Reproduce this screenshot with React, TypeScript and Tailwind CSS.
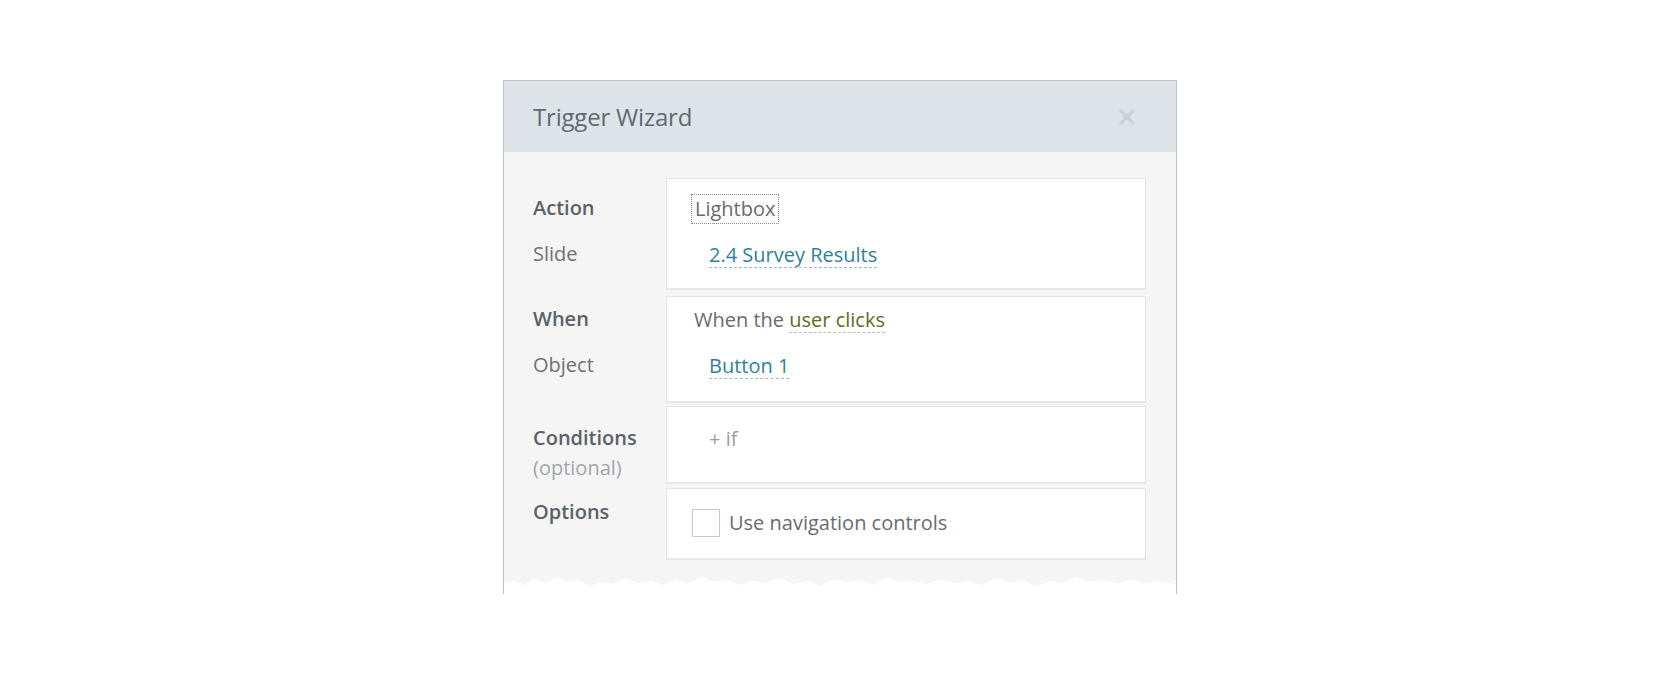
import { X } from 'lucide-react';

// ── Torn paper edge along the bottom of the cropped dialog ─────────
const TORN_POINTS =
  '0,9 10,7 20,11 30,5 42,9 54,3 62,8 74,6 86,12 98,8 110,10 122,4 134,9 148,7 160,11 172,6 186,9 198,2 210,8 224,6 238,11 250,7 262,9 276,4 290,10 304,7 318,12 330,5 344,8 356,6 370,11 384,3 396,8 410,7 424,10 438,5 452,9 466,7 480,11 494,4 508,9 520,6 534,12 548,7 560,9 574,3 588,8 602,6 616,10 628,5 642,9 656,7 674,10 674,20 0,20';

function TornEdge() {
  return (
    <svg
      className="absolute left-0 bottom-0 w-full h-[20px] pointer-events-none"
      viewBox="0 0 674 20"
      preserveAspectRatio="none"
      aria-hidden="true"
    >
      <polygon points={TORN_POINTS} fill="#ffffff" />
    </svg>
  );
}

// ── Pieces ────────────────────────────────────────────
function Link({ children }: { children: React.ReactNode }) {
  return (
    <span className="text-[#2f7f9c] border-b border-dashed border-[#9fb9c4] leading-[25px]">
      {children}
    </span>
  );
}

function Panel({ className, children }: { className: string; children: React.ReactNode }) {
  return (
    <div
      className={`w-[480px] bg-white border border-[#e4e4e4] border-b-[2px] border-b-[#e8e8e8] ${className}`}
    >
      {children}
    </div>
  );
}

// ── Main ─────────────────────────────────────────────
export default function App() {
  return (
    <div
      className="w-[1680px] h-[676px] bg-white flex justify-center pt-[80px]"
      style={{ fontFamily: '"Open Sans", "Noto Sans", sans-serif' }}
    >
      <div className="relative w-[674px] h-[514px] overflow-hidden border-x border-t border-[#b9c0c6] bg-[#f5f5f5]">
        {/* Header */}
        <div className="h-[71px] bg-[#dee3e7] flex items-center justify-between pl-[29px] pr-[37px]">
          <span className="text-[24px] text-[#5f6a72] tracking-[-0.2px]">Trigger Wizard</span>
          <X size={24} strokeWidth={3.2} className="text-[#cbd0d4]" />
        </div>

        {/* Body */}
        <div className="pt-[26px] pl-[29px] flex flex-col text-[20px]">
          {/* Action / Slide */}
          <div className="flex">
            <div className="w-[133px] pt-[7px] text-[#6d7277]">
              <div className="h-[46px] leading-[46px] font-semibold text-[#5a6269]">Action</div>
              <div className="h-[46px] leading-[46px]">Slide</div>
            </div>
            <Panel className="h-[112px] pt-[7px]">
              <div className="h-[46px] flex items-center pl-[24px]">
                <span className="border border-dotted border-[#8a8a8a] px-[3px] leading-[28px] text-[#666b70]">
                  Lightbox
                </span>
              </div>
              <div className="h-[46px] flex items-center pl-[42px]">
                <Link>2.4 Survey Results</Link>
              </div>
            </Panel>
          </div>

          {/* When / Object */}
          <div className="flex mt-[6px]">
            <div className="w-[133px] text-[#6d7277]">
              <div className="h-[46px] leading-[46px] font-semibold text-[#5a6269]">When</div>
              <div className="h-[46px] leading-[46px]">Object</div>
            </div>
            <Panel className="h-[107px]">
              <div className="h-[46px] flex items-center pl-[27px] text-[#676c70]">
                When the&nbsp;
                <span className="text-[#5d6d22] border-b border-dashed border-[#bcc3a2] leading-[25px]">
                  user clicks
                </span>
              </div>
              <div className="h-[46px] flex items-center pl-[42px]">
                <Link>Button 1</Link>
              </div>
            </Panel>
          </div>

          {/* Conditions */}
          <div className="flex mt-[3px]">
            <div className="w-[133px] pt-[17px]">
              <div className="h-[30px] leading-[30px] font-semibold text-[#5a6269]">Conditions</div>
              <div className="h-[30px] leading-[30px] text-[#a2a6a9]">(optional)</div>
            </div>
            <Panel className="h-[78px] pt-[17px]">
              <div className="h-[30px] leading-[30px] pl-[42px] text-[#9a9ea2]">+ if</div>
            </Panel>
          </div>

          {/* Options */}
          <div className="flex mt-[4px]">
            <div className="w-[133px] pt-[9px]">
              <div className="h-[30px] leading-[30px] font-semibold text-[#5a6269]">Options</div>
            </div>
            <Panel className="h-[72px] pt-[19px]">
              <label className="flex items-center pl-[25px] gap-[9px] text-[#676c70]">
                <span className="w-[28px] h-[28px] border border-[#c8c8c8] bg-white" />
                Use navigation controls
              </label>
            </Panel>
          </div>
        </div>

        <TornEdge />
      </div>
    </div>
  );
}
